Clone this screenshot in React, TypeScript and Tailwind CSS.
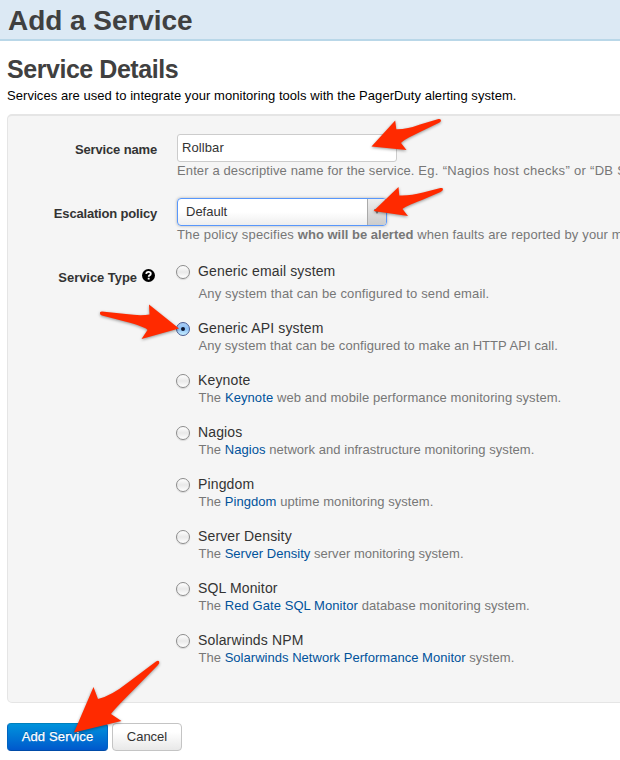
import type { ReactNode } from "react";

type Option = { name: string; desc: ReactNode; tracking: string; checked?: boolean; spaced?: boolean };

function Link({ children }: { children: ReactNode }) {
  return <a href="#" className="text-[#00529b]">{children}</a>;
}

const options: Option[] = [
  { name: "Generic email system", desc: "Any system that can be configured to send email.", tracking: "tracking-[0.14px]", spaced: true },
  { name: "Generic API system", desc: "Any system that can be configured to make an HTTP API call.", tracking: "tracking-[0.07px]", checked: true },
  { name: "Keynote", desc: <>The <Link>Keynote</Link> web and mobile performance monitoring system.</>, tracking: "tracking-[0.09px]" },
  { name: "Nagios", desc: <>The <Link>Nagios</Link> network and infrastructure monitoring system.</>, tracking: "tracking-[0.05px]" },
  { name: "Pingdom", desc: <>The <Link>Pingdom</Link> uptime monitoring system.</>, tracking: "tracking-[0.06px]" },
  { name: "Server Density", desc: <>The <Link>Server Density</Link> server monitoring system.</>, tracking: "tracking-[0.03px]" },
  { name: "SQL Monitor", desc: <>The <Link>Red Gate SQL Monitor</Link> database monitoring system.</>, tracking: "tracking-[0.07px]" },
  { name: "Solarwinds NPM", desc: <>The <Link>Solarwinds Network Performance Monitor</Link> system.</>, tracking: "tracking-[0.03px]" },
];

function Radio({ checked }: { checked?: boolean }) {
  return checked ? (
    <span className="mt-[3px] flex h-3.5 w-3.5 shrink-0 items-center justify-center rounded-full border border-[#4a5c94] bg-linear-to-b from-[#a9cdf5] via-[#8dc0f5] to-[#c8f0ff]">
      <span className="h-1 w-1 rounded-full bg-[#0c1530]" />
    </span>
  ) : (
    <span className="mt-[3px] h-3.5 w-3.5 shrink-0 rounded-full border border-[#8c8c8c] bg-linear-to-b from-white via-[#e9e9e9] to-white shadow-[0_1px_1px_rgba(0,0,0,0.12)]" />
  );
}

function Arrows() {
  return (
    <svg className="pointer-events-none absolute top-0 left-0 h-[760px] w-[620px] drop-shadow-[0_1.5px_1.5px_rgba(0,0,0,0.4)]" viewBox="0 0 620 760" fill="#ff2a00">
      <path d="M371.500 146.500L395.200 120.500L396.300 129.300Q407 129.500 420 124.500L438.500 119Q441 118.500 441 120.500Q441 122 438.500 123L420 132Q403 140 401 143L406.500 150Z" />
      <path d="M373.500 211L398.500 187L399.300 195.500Q410 196 423 192.500L440.500 188Q443 187.500 443 189.300Q443 191 440.500 192L422 200Q405 206.500 402.500 209L408 216Z" />
      <path d="M179 328.500L149 304.500L149.500 314.500Q140 316 126 314L102 311.500Q99.500 311.500 100 313.500Q100 315 102 315.500L125 321.500Q146 327 147.500 330L141.500 339Z" />
      <path d="M74 732.500L93.500 687L98 699Q111 696 128 682.500L156 661.500Q158.500 660 159.200 661.800Q160 663.300 157.500 665.500L133.500 690Q113.500 710 111 714L121.500 721Z" />
    </svg>
  );
}

export default function App() {
  return (
    <div className="relative h-[760px] w-[620px] overflow-hidden bg-white font-['Liberation_Sans',Arial,sans-serif] text-[13px] leading-[18px] text-[#333]">
      <header className="h-[41px] border-b-2 border-[#b9d7e8] bg-[#dce9f4] pl-2">
        <h1 className="pt-px text-[28px] leading-10 font-bold tracking-[-0.05px] whitespace-nowrap text-[#404040]">Add a Service</h1>
      </header>

      <main className="pl-[7px]">
        <h2 className="pt-[13px] text-[25px] leading-[31px] font-bold tracking-[-0.45px] whitespace-nowrap text-[#404040]">Service Details</h2>
        <p className="mt-0.5 tracking-[0.05px] whitespace-nowrap text-black">Services are used to integrate your monitoring tools with the PagerDuty alerting system.</p>

        <section className="mt-[9px] h-[589px] w-[640px] rounded-[5px] border border-t-2 border-[#e5e5e5] bg-[#f5f5f5] pt-[18px] whitespace-nowrap">
          <div className="flex h-16">
            <label className="w-[149px] shrink-0 pt-[7px] text-right font-bold tracking-[-0.15px]">Service name</label>
            <div className="ml-5">
              <div className="h-7 w-[220px] rounded-[3px] border border-[#ccc] bg-white pt-1 pl-1 tracking-[0.1px]">Rollbar</div>
              <p className="tracking-[0.12px] text-[#777]">Enter a descriptive name for the service. <span className="tracking-[0.3px]">Eg. “Nagios host checks” or “DB Server”.</span></p>
            </div>
          </div>

          <div className="flex h-[59px]">
            <label className="w-[149px] shrink-0 pt-[7px] text-right font-bold tracking-[-0.18px]">Escalation policy</label>
            <div className="ml-5">
              <div className="flex h-7 w-[210px] overflow-hidden rounded-[4px] border border-[#5897fb] bg-linear-to-b from-white from-50% to-[#eeeeee] shadow-[0_0_3px_rgba(0,0,0,0.3)]">
                <span className="flex-1 pt-1 pl-2">Default</span>
                <span className="flex w-[19px] items-center border-l border-[#aaa] bg-linear-to-b from-[#eee] to-[#ccc] pl-1.5">
                  <svg className="h-1.5 w-1.5" viewBox="0 0 6 6" fill="#777"><path d="M0 0H6L3 5Z" /></svg>
                </span>
              </div>
              <p className="tracking-[0.14px] text-[#777]"><span className="tracking-[0.18px]">The policy specifies </span><b className="tracking-normal">who will be alerted</b> when faults are reported by your monitoring tools.</p>
            </div>
          </div>

          <div className="flex">
            <div className="flex w-[147px] shrink-0 justify-end pt-3 font-bold">
              <span className="tracking-[-0.05px]">Service Type</span>
              <svg className="ml-[5px] h-[13px] w-[13px] shrink-0" viewBox="0 0 12 12">
                <circle cx="6" cy="6" r="6" fill="#000" />
                <path d="M3.900 4.500Q4 2.600 6 2.600Q8.100 2.600 8.100 4.300Q8.100 5.300 7 5.900Q6.200 6.400 6.200 7.100" fill="none" stroke="#fff" strokeWidth="1.7" />
                <path d="M5.300 8.100H7V9.700H5.300Z" fill="#fff" />
              </svg>
            </div>
            <div className="ml-[21px] pt-[5px]">
              {options.map((o) => (
                <div key={o.name} className={o.spaced ? "flex h-[57px]" : "flex h-[52px]"}>
                  <Radio checked={o.checked} />
                  <div className="ml-[7.5px]">
                    <div className="pl-[0.5px] text-sm leading-[18px] tracking-[0.14px]">{o.name}</div>
                    <p className={`${o.tracking} ${o.spaced ? "mt-[5px] pl-px text-[#777]" : "pl-px text-[#777]"}`}>{o.desc}</p>
                  </div>
                </div>
              ))}
            </div>
          </div>
        </section>

        <div className="mt-5 flex gap-1">
          <button className="h-7 w-[101px] rounded-[4px] border border-t-[#0080bd] border-r-[#0064c0] border-b-[#004ba8] border-l-[#0064c0] bg-linear-to-b from-[#0093dc] to-[#0058cc] tracking-[0.15px] text-white [-webkit-text-stroke:0.25px_white] text-shadow-[0_-1px_0_rgba(0,0,0,0.25)]">Add Service</button>
          <button className="h-7 w-[70px] rounded-[4px] border border-[#c4c4c4] bg-linear-to-b from-white from-30% to-[#e8e8e8]">Cancel</button>
        </div>
      </main>
      <Arrows />
    </div>
  );
}
